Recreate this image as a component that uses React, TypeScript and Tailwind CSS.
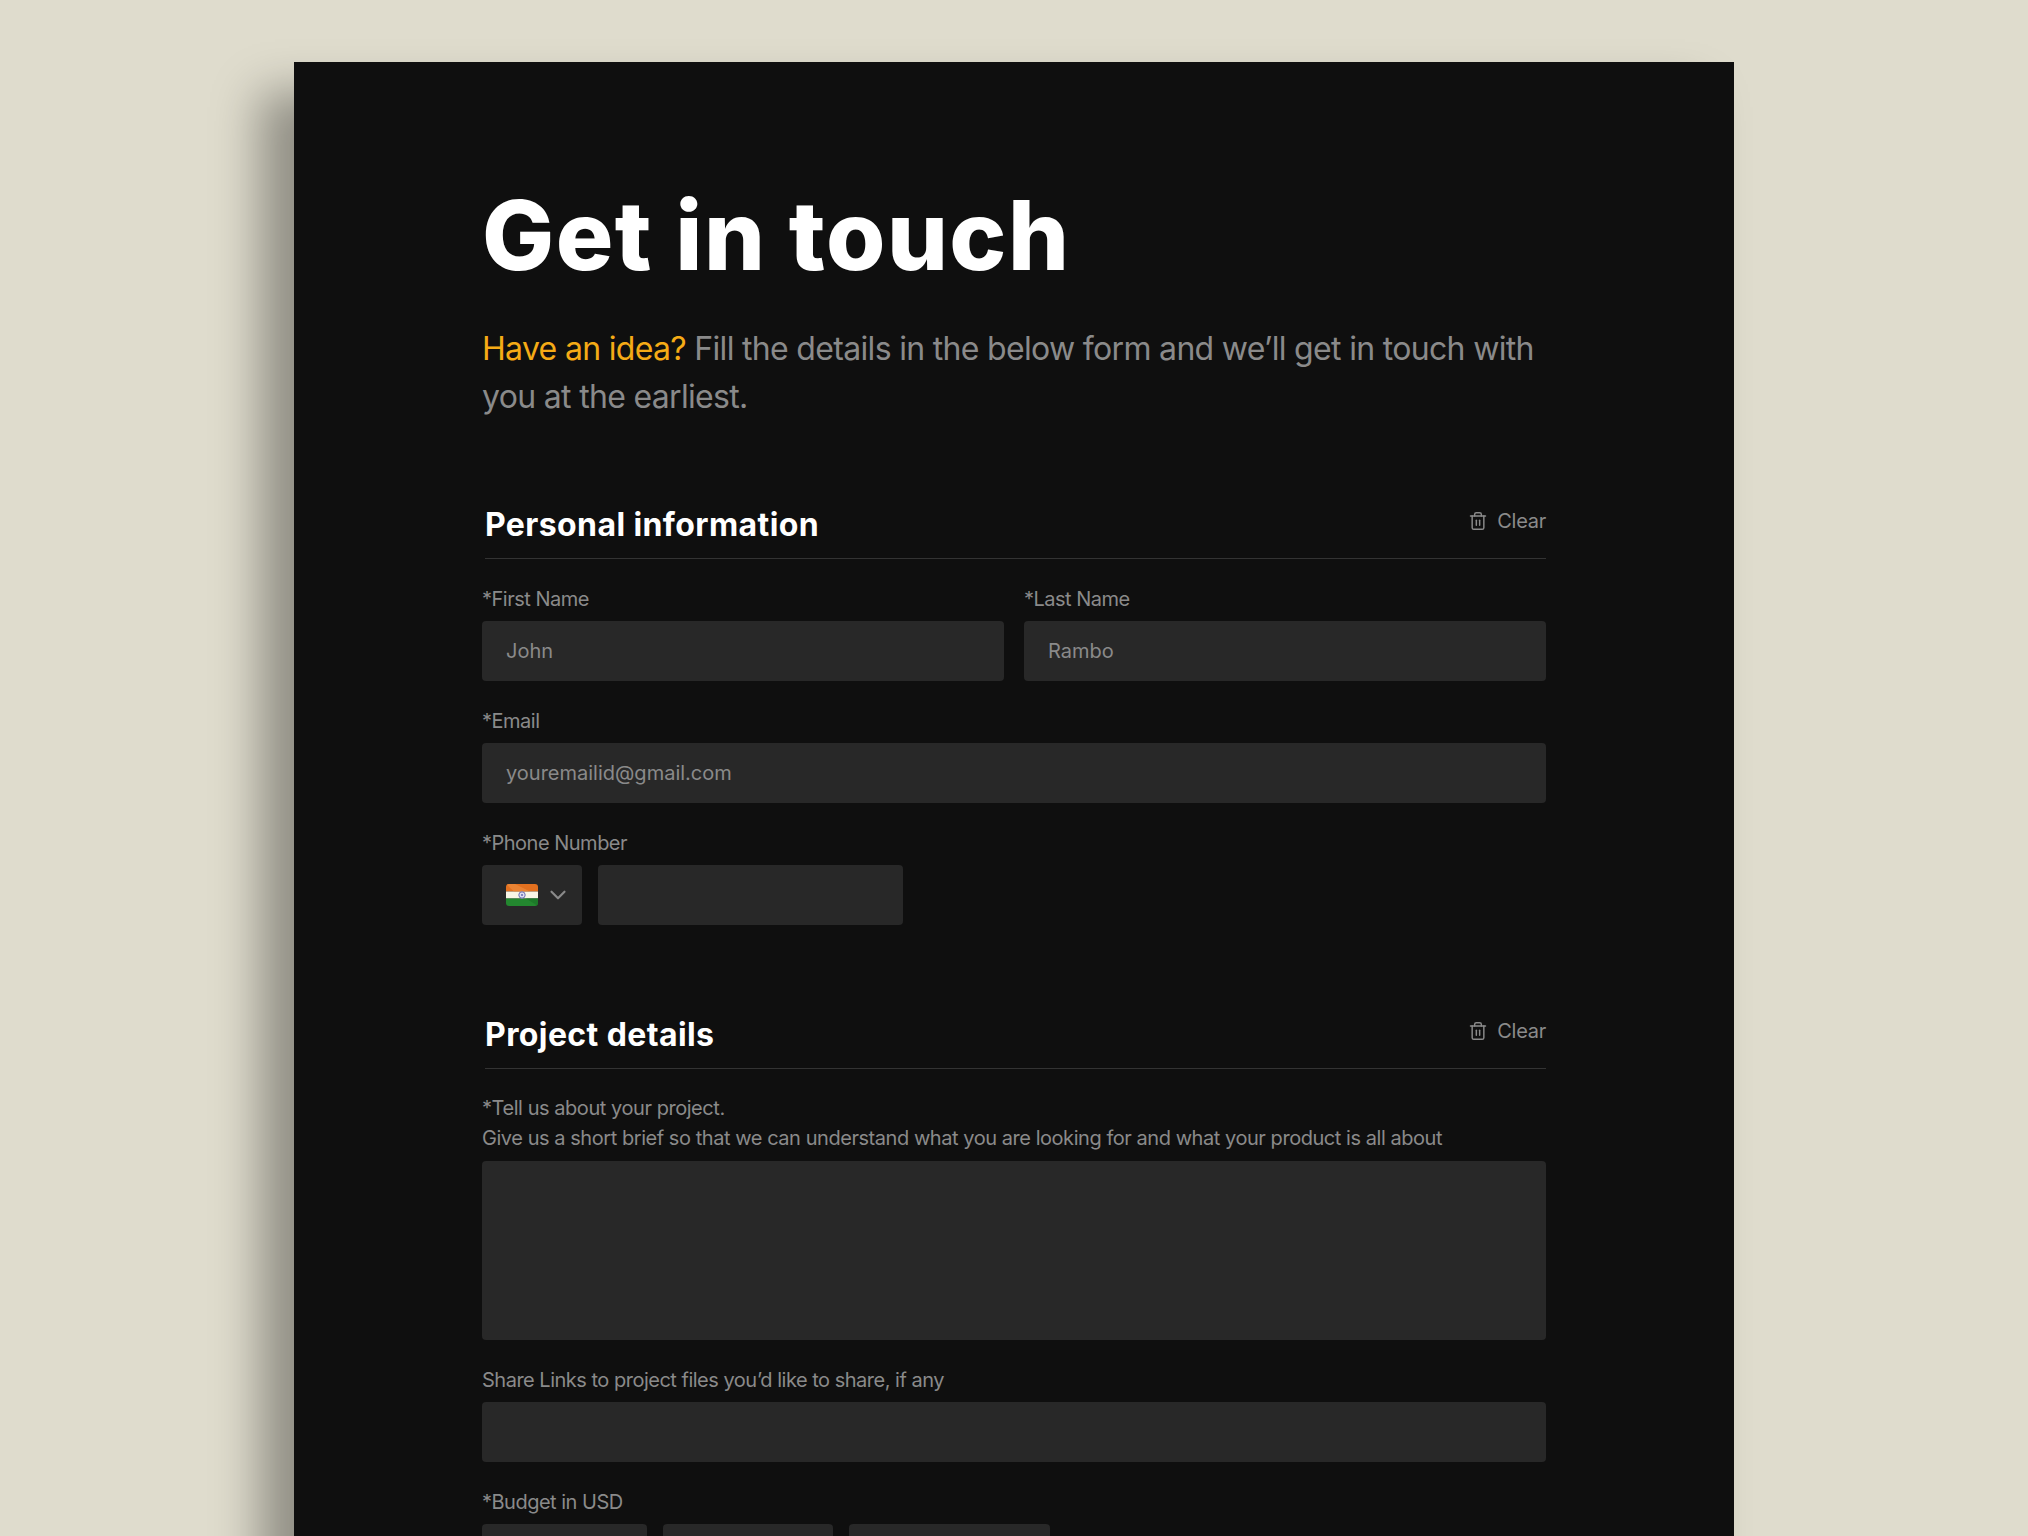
import { ChevronDown, Trash2 } from "lucide-react";

const inputClass =
  "block h-[60px] w-full rounded-[4px] bg-[#282828] px-6 text-[20px] text-[#8a8a8a] placeholder:text-[#8a8a8a] outline-none";
const labelClass = "mb-[8px] block text-[20px] leading-[28px] tracking-[-0.5px] text-[#8a8a8a]";

function SectionHeader({ title }: { title: string }) {
  return (
    <div className="ml-[3px] flex h-[55px] items-start justify-between border-b border-[#333333]">
      <h2 className="mt-[1px] text-[32px] leading-[40px] font-bold tracking-[0.4px] text-white">{title}</h2>
      <button className="mt-[2px] flex items-center gap-[9px] text-[20px] leading-[30px] tracking-[-0.25px] text-[#8a8a8a]">
        <Trash2 size={20} strokeWidth={1.75} />
        Clear
      </button>
    </div>
  );
}

function Field({ label, placeholder }: { label: string; placeholder?: string }) {
  return (
    <div className="flex-1">
      <label className={labelClass}>{label}</label>
      <input className={inputClass} placeholder={placeholder} />
    </div>
  );
}

function IndiaFlag() {
  return (
    <svg width="32" height="22" viewBox="0 0 32 22">
      <defs>
        <clipPath id="flag-clip">
          <rect width="32" height="22" rx="3" />
        </clipPath>
      </defs>
      <g clipPath="url(#flag-clip)">
        <rect width="32" height="7.5" fill="#e2701f" />
        <rect y="7.5" width="32" height="7" fill="#f8f5e6" />
        <rect y="14.5" width="32" height="7.5" fill="#23872f" />
        <path d="M0 0h9L24 7.5H8z" fill="#ee8b3c" opacity="0.7" />
        <path d="M20 14.5h12V22z" fill="#1b7426" opacity="0.7" />
        <circle cx="16" cy="11" r="3.2" fill="#dcdcf0" stroke="#6d70b5" strokeWidth="1" />
        <circle cx="16" cy="11" r="0.9" fill="#5c5fa8" />
      </g>
    </svg>
  );
}

export default function App() {
  return (
    <div className="h-[1536px] overflow-hidden bg-[#dfdccd] pt-[62px] font-['Inter',sans-serif]">
      <div className="mx-auto h-[1600px] w-[1440px] bg-[#0f0f0f] pt-[113px] pr-[188px] pl-[188px] shadow-[-34px_30px_44px_rgba(0,0,0,0.35)]">
        <h1 className="text-[96px] leading-[120px] font-extrabold tracking-[1.45px] text-white">Get in touch</h1>
        <p className="mt-[30px] text-[32px] leading-[48px] tracking-[-0.68px] text-[#8a8a8a]">
          <span className="text-[#f5ab16]">Have an idea?</span> Fill the details in the below form and we’ll get in touch with you at the earliest.
        </p>

        <section className="mt-[83px]">
          <SectionHeader title="Personal information" />
          <div className="mt-[26px] flex gap-5">
            <Field label="*First Name" placeholder="John" />
            <Field label="*Last Name" placeholder="Rambo" />
          </div>
          <div className="mt-[26px]">
            <Field label="*Email" placeholder="youremailid@gmail.com" />
          </div>
          <div className="mt-[26px]">
            <label className={labelClass}>*Phone Number</label>
            <div className="flex gap-4">
              <button className="flex h-[60px] w-[100px] items-center gap-[7px] rounded-[4px] bg-[#282828] pl-6 text-[#8a8a8a]">
                <IndiaFlag />
                <ChevronDown size={26} strokeWidth={2} />
              </button>
              <input className={`${inputClass} !w-[305px]`} />
            </div>
          </div>
        </section>

        <section className="mt-[89px]">
          <SectionHeader title="Project details" />
          <p className="mt-[24px] text-[20px] leading-[30px] tracking-[-0.45px] text-[#8a8a8a]">
            *Tell us about your project.
            <br />
            Give us a short brief so that we can understand what you are looking for and what your product is all about
          </p>
          <textarea className="mt-[8px] block h-[179px] w-full resize-none rounded-[4px] bg-[#282828] outline-none" />
          <div className="mt-[26px]">
            <Field label="Share Links to project files you’d like to share, if any" />
          </div>
          <div className="mt-[26px]">
            <label className={labelClass}>*Budget in USD</label>
            <div className="flex gap-4">
              <div className="h-[60px] w-[165px] rounded-[4px] bg-[#282828]" />
              <div className="h-[60px] w-[170px] rounded-[4px] bg-[#282828]" />
              <div className="h-[60px] w-[201px] rounded-[4px] bg-[#282828]" />
            </div>
          </div>
        </section>
      </div>
    </div>
  );
}
